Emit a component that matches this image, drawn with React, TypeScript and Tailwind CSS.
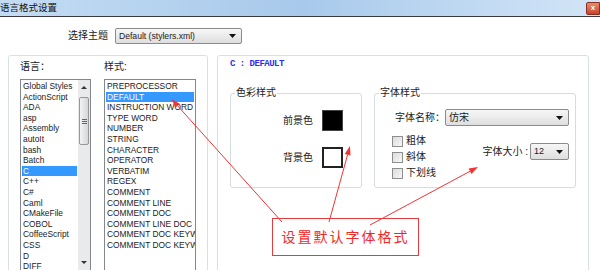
import React from 'react';

const LANGS = [
  'Global Styles', 'ActionScript', 'ADA', 'asp', 'Assembly', 'autoIt', 'bash', 'Batch', 'C',
  'C++', 'C#', 'Caml', 'CMakeFile', 'COBOL', 'CoffeeScript', 'CSS', 'D', 'DIFF',
];

const STYLES = [
  'PREPROCESSOR', 'DEFAULT', 'INSTRUCTION WORD', 'TYPE WORD', 'NUMBER', 'STRING', 'CHARACTER',
  'OPERATOR', 'VERBATIM', 'REGEX', 'COMMENT', 'COMMENT LINE', 'COMMENT DOC', 'COMMENT LINE DOC',
  'COMMENT DOC KEYWORD', 'COMMENT DOC KEYWORD ERROR',
];

// red annotation arrow: line + filled head at (x2, y2)
function Arrow({ x1, y1, x2, y2 }: { x1: number; y1: number; x2: number; y2: number }) {
  const a = Math.atan2(y2 - y1, x2 - x1);
  const len = 9;
  const half = 3;
  const bx = x2 - len * Math.cos(a);
  const by = y2 - len * Math.sin(a);
  const px = -Math.sin(a) * half;
  const py = Math.cos(a) * half;
  return (
    <g>
      <line x1={x1} y1={y1} x2={bx} y2={by} stroke="#f03434" strokeWidth={1} />
      <polygon points={`${x2},${y2} ${bx + px},${by + py} ${bx - px},${by - py}`} fill="#f03434" />
    </g>
  );
}

function Combo({ text, className }: { text: string; className: string }) {
  return (
    <div
      className={`flex items-center justify-between rounded-[2px] border border-[#8b8b8b] bg-linear-to-b from-[#f7f7f7] to-[#dedede] pl-[3px] pr-[5px] leading-none ${className}`}
    >
      <span>{text}</span>
      <svg width="7" height="4" viewBox="0 0 7 4">
        <path d="M0 0H7L3.5 4Z" fill="#111" />
      </svg>
    </div>
  );
}

function Checkbox({ label }: { label: string }) {
  return (
    <div className="flex h-[16px] items-center gap-[3px]">
      <span className="h-[11px] w-[11px] border border-[#8e8e8e] bg-linear-to-br from-[#dcdcdc] to-[#f6f6f6]" />
      <span className="text-[10px] leading-none">{label}</span>
    </div>
  );
}

function ScrollBar() {
  return (
    <div className="flex w-[12px] shrink-0 flex-col bg-[#eaeaea]">
      <div className="flex h-[15px] items-center justify-center">
        <svg width="6" height="3" viewBox="0 0 6 3">
          <path d="M0 3H6L3 0Z" fill="#333" />
        </svg>
      </div>
      <div className="mx-[1px] mt-[2px] flex h-[48px] flex-col items-center justify-center gap-[1px] rounded-[2px] border border-[#979797] bg-linear-to-r from-[#f3f3f3] to-[#d6d6d6]">
        <span className="h-px w-[5px] bg-[#666]" />
        <span className="h-px w-[5px] bg-[#666]" />
        <span className="h-px w-[5px] bg-[#666]" />
      </div>
      <div className="flex-1" />
      <div className="flex h-[15px] items-center justify-center">
        <svg width="6" height="3" viewBox="0 0 6 3">
          <path d="M0 0H6L3 3Z" fill="#333" />
        </svg>
      </div>
    </div>
  );
}

export default function App() {
  return (
    <div className="relative h-[270px] w-[600px] overflow-hidden bg-white font-['Liberation_Sans','Noto_Sans_CJK_SC',sans-serif] text-[#1b1b1b]">
      {/* title bar */}
      <div className="flex h-[17px] items-center justify-between border-b border-[#3b3b3b] bg-linear-to-r from-[#c4dcf3] via-[#a8c9eb] to-[#d3e5f7]">
        <span className="text-[9.5px] leading-none text-[#111]">语言格式设置</span>
        <div className="flex h-[13px] w-[14px] items-center justify-center rounded-l-[2px] border border-[#8a3020] bg-linear-to-b from-[#e88a70] to-[#c8432a] text-[8px] leading-none font-bold text-white">
          x
        </div>
      </div>

      {/* theme selector */}
      <div className="flex h-[38px] items-center gap-[7px] pl-[68px]">
        <span className="text-[10px] leading-none">选择主题</span>
        <Combo text="Default (stylers.xml)" className="h-[16px] w-[127px] text-[8.6px]" />
      </div>

      <div className="flex gap-[9px] pl-[8px]">
        {/* language / style lists */}
        <div className="flex h-[240px] w-[200px] shrink-0 gap-[13px] rounded-[3px] border border-[#d8e0e6] pl-[11px] pt-[1px]">
          <div className="w-[71px]">
            <div className="h-[20px] text-[10px] leading-[20px]">语言：</div>
            <div className="mt-[2px] flex h-[192px] w-[71px] border border-[#838890]">
              <div className="flex-1 overflow-hidden p-[1px]">
                {LANGS.map((l) => (
                  <div
                    key={l}
                    className={`h-[10.6px] whitespace-nowrap pl-[1px] text-[8.4px] leading-[10.6px] ${l === 'C' ? 'bg-[#3399ff] text-white' : ''}`}
                  >
                    {l}
                  </div>
                ))}
              </div>
              <ScrollBar />
            </div>
          </div>
          <div className="w-[92px]">
            <div className="h-[20px] text-[10px] leading-[20px]">样式:</div>
            <div className="mt-[2px] h-[192px] w-[92px] overflow-hidden border border-[#838890] p-[1px]">
              {STYLES.map((s) => (
                <div
                  key={s}
                  className={`h-[10.6px] whitespace-nowrap pl-[1px] text-[8.4px] leading-[10.6px] ${s === 'DEFAULT' ? 'bg-[#3399ff] text-white' : ''}`}
                >
                  {s}
                </div>
              ))}
            </div>
          </div>
        </div>

        {/* style editor */}
        <div className="h-[240px] w-[372px] shrink-0 rounded-[3px] border border-[#d8e0e6] pl-[12px] pt-[2px]">
          <div className="font-['Liberation_Mono',monospace] text-[9px] leading-[12px] font-bold tracking-[-0.5px] text-[#2e2ef2]">
            C : DEFAULT
          </div>

          <div className="mt-[17px] flex gap-[12px]">
            <fieldset className="h-[101px] w-[132px] rounded-[3px] border border-[#d5dde3]">
              <legend className="ml-[4px] px-[1px] text-[10px] leading-[12px]">色彩样式</legend>
              <div className="flex flex-col items-end pr-[18px] pt-[11px]">
                <div className="flex items-center gap-[9px]">
                  <span className="text-[10px] leading-none">前景色</span>
                  <span className="h-[21px] w-[21px] border border-[#444] bg-black" />
                </div>
                <div className="mt-[16px] flex items-center gap-[9px]">
                  <span className="text-[10px] leading-none">背景色</span>
                  <span className="h-[21px] w-[21px] border-2 border-[#222] bg-white" />
                </div>
              </div>
            </fieldset>

            <fieldset className="h-[101px] w-[202px] rounded-[3px] border border-[#d5dde3]">
              <legend className="ml-[4px] px-[1px] text-[10px] leading-[12px]">字体样式</legend>
              <div className="pl-[17px] pr-[6px] pt-[10px]">
                <div className="ml-[3px] flex items-center">
                  <span className="w-[50px] text-[10px] leading-none">字体名称：</span>
                  <Combo text="仿宋" className="h-[17px] flex-1 text-[10px]" />
                </div>
                <div className="mt-[7px] flex">
                  <div>
                    <Checkbox label="粗体" />
                    <Checkbox label="斜体" />
                    <Checkbox label="下划线" />
                  </div>
                  <div className="ml-auto mt-[10px] flex h-[17px] items-center gap-[2px]">
                    <span className="text-[10px] leading-none">字体大小 :</span>
                    <Combo text="12" className="h-[17px] w-[39px] text-[9px]" />
                  </div>
                </div>
              </div>
            </fieldset>
          </div>

          <div className="ml-[42px] mt-[30px] flex h-[38px] w-[147px] items-center justify-center border border-[#e63c3c]">
            <span className="text-[14px] leading-none tracking-[2px] text-[#f02828]">设置默认字体格式</span>
          </div>
        </div>
      </div>

      {/* annotation arrows */}
      <svg className="pointer-events-none absolute inset-0" width="600" height="270">
        <Arrow x1={282} y1={222} x2={171.5} y2={99} />
        <Arrow x1={329} y1={222} x2={350} y2={146} />
        <Arrow x1={370} y1={225} x2={478} y2={167} />
      </svg>
    </div>
  );
}
